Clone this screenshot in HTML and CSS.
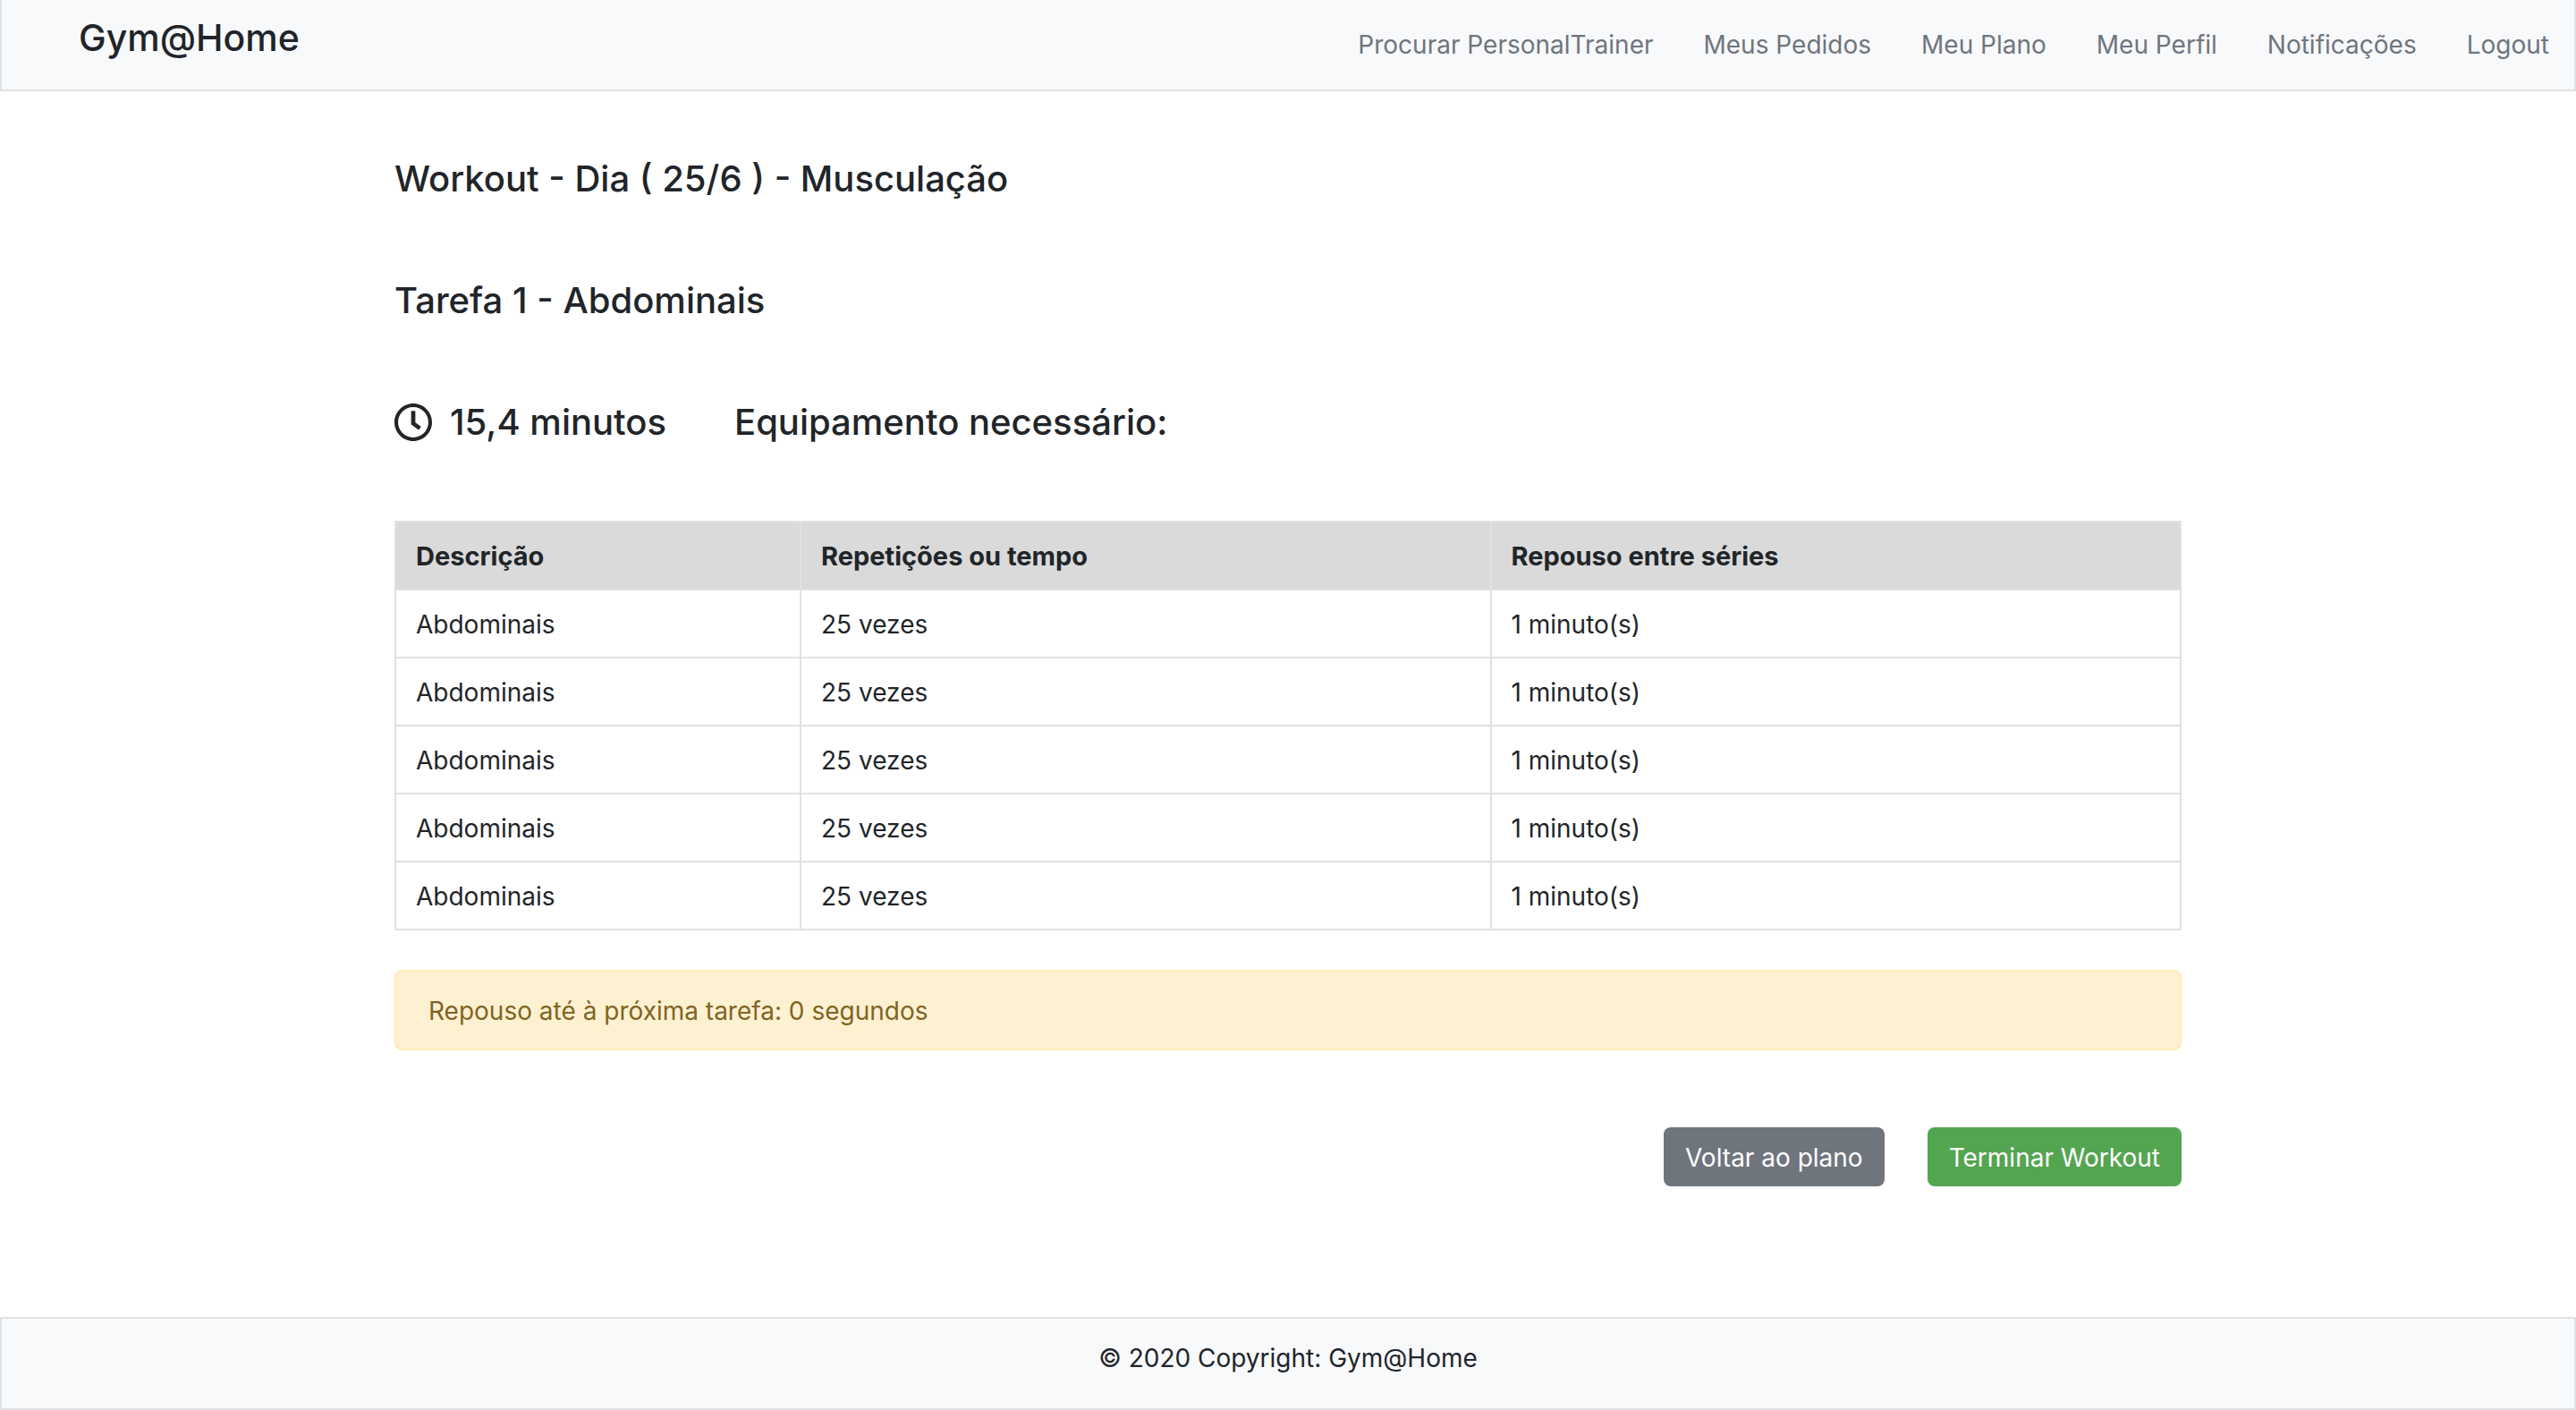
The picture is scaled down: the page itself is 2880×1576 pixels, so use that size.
FILE: index.html
```html
<!DOCTYPE html>
<html lang="pt">
<head>
<meta charset="utf-8">
<title>Gym@Home</title>
<link rel="stylesheet" href="styles.css">
</head>
<body>
<header class="navbar">
  <a class="brand" href="#">Gym@Home</a>
  <nav class="nav-links">
    <a href="#">Procurar PersonalTrainer</a>
    <a href="#">Meus Pedidos</a>
    <a href="#">Meu Plano</a>
    <a href="#">Meu Perfil</a>
    <a href="#">Notificações</a>
    <a href="#">Logout</a>
  </nav>
</header>
<main class="container">
  <h1 class="heading">Workout - Dia ( 25/6 ) - Musculação</h1>
  <h2 class="heading">Tarefa 1 - Abdominais</h2>
  <div class="task-info">
    <h3 class="heading duration">
      <svg class="clock" viewBox="8 8 496 496" aria-hidden="true"><path fill="currentColor" d="M256 8C119 8 8 119 8 256s111 248 248 248 248-111 248-248S393 8 256 8zm0 448c-110.500 0-200-89.500-200-200S145.500 56 256 56s200 89.500 200 200-89.500 200-200 200zm61.800-104.400l-84.900-61.700c-3.100-2.300-4.900-5.900-4.900-9.700V116c0-6.600 5.400-12 12-12h32c6.600 0 12 5.400 12 12v141.700l66.800 48.600c5.400 3.900 6.500 11.400 2.600 16.800L334.600 349c-3.900 5.300-11.400 6.500-16.800 2.600z"/></svg>
      15,4 minutos
    </h3>
    <h3 class="heading">Equipamento necessário:</h3>
  </div>
  <table class="exercises">
    <thead>
      <tr><th class="col-name" scope="col">Descrição</th><th scope="col">Repetições ou tempo</th><th scope="col">Repouso entre séries</th></tr>
    </thead>
    <tbody>
      <tr><td>Abdominais</td><td>25 vezes</td><td>1 minuto(s)</td></tr>
      <tr><td>Abdominais</td><td>25 vezes</td><td>1 minuto(s)</td></tr>
      <tr><td>Abdominais</td><td>25 vezes</td><td>1 minuto(s)</td></tr>
      <tr><td>Abdominais</td><td>25 vezes</td><td>1 minuto(s)</td></tr>
      <tr><td>Abdominais</td><td>25 vezes</td><td>1 minuto(s)</td></tr>
    </tbody>
  </table>
  <div class="alert" role="alert">Repouso até à próxima tarefa: 0 segundos</div>
  <div class="actions">
    <button class="btn btn-secondary" type="button">Voltar ao plano</button>
    <button class="btn btn-success" type="button">Terminar Workout</button>
  </div>
</main>
<footer class="footer">© 2020 Copyright: Gym@Home</footer>
</body>
</html>
```

FILE: styles.css
```css
* {
  box-sizing: border-box;
}

body {
  margin: 0;
  min-height: 100vh;
  display: flex;
  flex-direction: column;
  background: #fff;
  color: #212529;
  font-family: Inter, "Liberation Sans", sans-serif;
  font-size: 28px;
  line-height: 44px;
}

a {
  color: inherit;
  text-decoration: none;
}

.navbar {
  display: flex;
  justify-content: space-between;
  align-items: flex-start;
  padding: 16px 28px 28px 86px;
  background: #f8f9fb;
  border: 2px solid #dee2e6;
  border-top: 0;
}

.brand {
  font-size: 41px;
  font-weight: 500;
  line-height: 52px;
}

.nav-links {
  display: flex;
  gap: 56px;
  padding-top: 12px;
  color: #6f757d;
}

.container {
  width: 100%;
  max-width: 1998px;
  margin: 0 auto;
  padding: 72px 0 146px;
}

.heading {
  margin: 0 0 84px;
  font-size: 40px;
  font-weight: 500;
  line-height: 52px;
}

.task-info {
  display: flex;
  gap: 76px;
}

.duration {
  display: flex;
  align-items: center;
  gap: 20px;
}

.clock {
  width: 42px;
  height: 42px;
}

.exercises {
  width: 100%;
  table-layout: fixed;
  border-collapse: collapse;
  margin-bottom: 44px;
}

.exercises th,
.exercises td {
  padding: 16px 22px 14px;
  border: 2px solid #dee2e6;
  text-align: left;
}

.exercises th {
  background: #dadada;
  font-size: 29px;
  font-weight: 700;
}

.exercises .col-name {
  width: 453px;
}

.alert {
  padding: 22px 36px 20px;
  margin-bottom: 86px;
  background: #fdf1d2;
  border: 2px solid #feecb9;
  border-radius: 8px;
  color: #816421;
}

.actions {
  display: flex;
  justify-content: flex-end;
  gap: 48px;
}

.btn {
  padding: 12px 24px 10px;
  border: 0;
  border-radius: 8px;
  color: #fff;
  font: inherit;
}

.btn-secondary {
  background: #6f757d;
}

.btn-success {
  background: #54a551;
}

.footer {
  margin-top: auto;
  padding: 22px 36px 34px;
  background: #f8f9fb;
  border: 2px solid #dee2e6;
  text-align: center;
}
```
